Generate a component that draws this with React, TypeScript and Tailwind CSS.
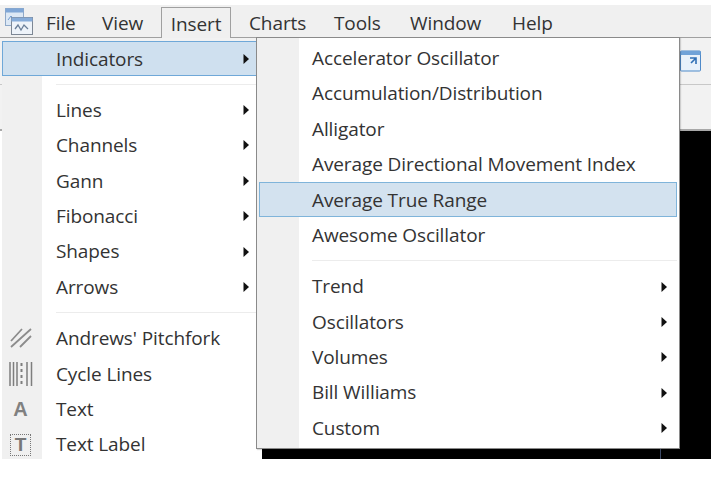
import { ReactNode } from "react";

const font = { fontFamily: '"Open Sans", "Noto Sans", sans-serif' };

function Arrow({ className }: { className: string }) {
  return (
    <svg className={className} width="7" height="12" viewBox="0 0 7 12">
      <path d="M0.5 1 L6 6 L0.5 11 Z" fill="#111" />
    </svg>
  );
}

function Row({ label, sub }: { label: string; sub?: boolean }) {
  return (
    <div className="flex h-[35.4px] items-center">
      <span className="text-[19px] tracking-[-0.1px] text-[#333]">{label}</span>
      {sub && <Arrow className="ml-auto" />}
    </div>
  );
}

function AppIcon() {
  return (
    <svg width="30" height="30" viewBox="0 0 30 30" className="ml-1 shrink-0 self-end">
      <rect x="1.5" y="1.5" width="18" height="17" fill="#dce8f5" stroke="#8fa9c9" />
      <rect x="1.5" y="1.5" width="18" height="4" fill="#7fa6d6" />
      <path d="M4 13 L7 9 L10 13" fill="none" stroke="#6f9bd0" />
      <rect x="7.5" y="10.5" width="21" height="17" fill="#eef3f9" stroke="#7d8794" />
      <rect x="7.5" y="10.5" width="21" height="4" fill="#86acd9" />
      <path d="M11 22 L14 18 L17 23 L20 18 L24 22" fill="none" stroke="#6a7f99" strokeWidth="1.3" />
    </svg>
  );
}

function Gutter({ children }: { children: ReactNode }) {
  return <div className="flex h-[35.4px] items-center justify-center">{children}</div>;
}

export default function App() {
  return (
    <div className="h-[483px] w-[727px] overflow-hidden bg-white" style={font}>
      <div className="relative flex h-[459px] w-[711px] flex-col pt-[5px]">
        {/* menu bar */}
        <div className="flex h-[33px] shrink-0 items-end border-b border-[#a0a0a0] bg-[#f0f0f0]">
          <AppIcon />
          <div className="ml-[12px] flex h-[31px] items-center text-[19px] tracking-[-0.1px] text-[#333]">
            <span className="w-[56px] pt-[3px]">File</span>
            <span className="w-[59px] pt-[3px]">View</span>
            <span className="relative top-px flex h-[31px] w-[70px] items-center justify-center border border-b-0 border-[#a0a0a0] bg-[#f0f0f0] pt-[2px]">
              Insert
            </span>
            <span className="ml-[18px] w-[85px] pt-[3px]">Charts</span>
            <span className="w-[76px] pt-[3px]">Tools</span>
            <span className="w-[102px] pt-[3px]">Window</span>
            <span className="pt-[3px]">Help</span>
          </div>
        </div>

        {/* toolbars */}
        <div className="flex h-[47px] shrink-0 items-center justify-end border-b border-[#c8c8c8] bg-[#f2f2f2] pr-[10px]">
          <svg width="21" height="22" viewBox="0 0 21 22">
            <rect x="0.5" y="1" width="20" height="20" rx="1" fill="#e8f1fa" stroke="#4f8ac9" />
            <rect x="0.5" y="1" width="20" height="4" fill="#6fa2d8" />
            <path d="M10 8 H16 V14 M16 8 L11 13" fill="none" stroke="#2f6fb5" strokeWidth="1.6" />
          </svg>
        </div>
        <div className="h-[46px] shrink-0 border-b-2 border-[#a8a8a8] bg-[#f2f2f2]" />

        {/* chart area */}
        <div className="ml-[262px] min-h-0 flex-1 bg-black" />
        <div className="absolute bottom-0 left-[660px] h-[12px] w-px bg-[#3d4a66]" />

        {/* Insert menu */}
        <div className="absolute left-[2px] top-[41px] h-[418px] w-[255px] overflow-hidden bg-white">
          <div className="absolute bottom-0 left-0 top-0 w-[40px] bg-[#f0f0f0]" />
          <div className="relative">
            <div className="flex h-[35.4px] items-center border border-[#6fa8d8] bg-[#cfe0ef] pl-[53px] pr-[6px]">
              <span className="pt-px text-[19px] tracking-[-0.1px] text-[#333]">Indicators</span>
              <Arrow className="ml-auto" />
            </div>
            <div className="ml-[54px] mt-[7.5px] h-px bg-[#ececec]" />
            <div className="mt-[7.5px] pl-[54px] pr-[7px]">
              {["Lines", "Channels", "Gann", "Fibonacci", "Shapes", "Arrows"].map((l) => (
                <Row key={l} label={l} sub />
              ))}
            </div>
            <div className="ml-[54px] mt-[7.5px] h-px bg-[#ececec]" />
            <div className="relative mt-[7.5px] pl-[54px] pr-[7px]">
              <div className="absolute left-0 top-0 w-[37px]">
                <Gutter>
                  <svg width="24" height="22" viewBox="0 0 24 22" fill="none" stroke="#8c8c8c" strokeWidth="1.8">
                    <path d="M2 14 L13 2 M2 20 L22 2 M11 20 L22 9" />
                  </svg>
                </Gutter>
                <Gutter>
                  <svg width="24" height="26" viewBox="0 0 24 26" fill="none" stroke="#7e7e7e" strokeWidth="1.5">
                    <path d="M1 1 V25 M4.5 1 V25 M8 1 V25 M18 1 V25 M22.5 1 V25" />
                    <path d="M12.5 2 V24" strokeDasharray="3 3" strokeWidth="2" />
                  </svg>
                </Gutter>
                <Gutter>
                  <span className="text-[20px] font-bold text-[#808080]" style={{ fontFamily: '"Liberation Sans", sans-serif' }}>
                    A
                  </span>
                </Gutter>
                <Gutter>
                  <span
                    className="flex h-[22px] w-[21px] items-center justify-center border border-dotted border-[#777] text-[19px] font-bold leading-none text-[#777]"
                    style={{ fontFamily: '"Liberation Sans", sans-serif' }}
                  >
                    T
                  </span>
                </Gutter>
              </div>
              {["Andrews' Pitchfork", "Cycle Lines", "Text", "Text Label"].map((l) => (
                <Row key={l} label={l} />
              ))}
            </div>
          </div>
        </div>

        {/* Indicators submenu */}
        <div className="absolute left-[256px] top-[37px] w-[424px] border border-[#8a8a8a] bg-white pb-[2px] pl-[2px] pr-[2px] pt-[2.5px] shadow-[1px_1px_1px_rgba(0,0,0,0.15)]">
          <div className="absolute bottom-0 left-0 top-0 w-[42px] bg-[#f0f0f0]" />
          <div className="relative">
            {[
              "Accelerator Oscillator",
              "Accumulation/Distribution",
              "Alligator",
              "Average Directional Movement Index",
            ].map((l) => (
              <div key={l} className="pl-[53px]">
                <Row label={l} />
              </div>
            ))}
            <div className="flex h-[35.4px] items-center border border-[#7fb4da] bg-[#d3e2ef] pl-[52px]">
              <span className="text-[19px] tracking-[-0.1px] text-[#333]">Average True Range</span>
            </div>
            <div className="pl-[53px]">
              <Row label="Awesome Oscillator" />
            </div>
            <div className="ml-[53px] mt-[7.5px] h-px bg-[#ececec]" />
            <div className="mt-[7.5px] pl-[53px] pr-[9px]">
              {["Trend", "Oscillators", "Volumes", "Bill Williams", "Custom"].map((l) => (
                <Row key={l} label={l} sub />
              ))}
            </div>
          </div>
        </div>
      </div>
    </div>
  );
}
